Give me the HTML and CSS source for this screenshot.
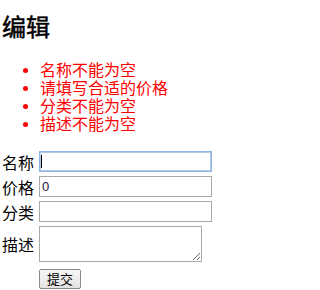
FILE: index.html
```html
<!DOCTYPE html>
<html lang="zh">
<head>
<meta charset="utf-8">
<title>编辑</title>
<link rel="stylesheet" href="styles.css">
</head>
<body>
<div class="page">
  <h2 class="title">编辑</h2>
  <ul class="errors">
    <li>名称不能为空</li>
    <li>请填写合适的价格</li>
    <li>分类不能为空</li>
    <li>描述不能为空</li>
  </ul>
  <form class="form">
    <div class="row">
      <label class="label">名称</label>
      <span class="field-wrap">
        <input class="field focused" type="text" value="">
        <span class="caret"></span>
      </span>
    </div>
    <div class="row">
      <label class="label">价格</label>
      <input class="field" type="text" value="0">
    </div>
    <div class="row">
      <label class="label">分类</label>
      <input class="field" type="text" value="">
    </div>
    <div class="row">
      <label class="label">描述</label>
      <textarea class="area"></textarea>
    </div>
    <div class="actions">
      <button class="submit" type="button">提交</button>
    </div>
  </form>
</div>
</body>
</html>
```

FILE: styles.css
```css
html, body {
  margin: 0;
  padding: 0;
  background: #fff;
}

body {
  font-family: "Noto Sans CJK SC", "Liberation Sans", sans-serif;
  font-size: 16px;
  color: #000;
}

.page {
  padding: 0 2px;
}

.title {
  margin: 12px 0 0;
  font-size: 24px;
  line-height: 28px;
  font-weight: 400;
  -webkit-text-stroke: 0.5px #000;
}

.errors {
  margin: 20px 0 0;
  padding-left: 38px;
  color: #ff0000;
  font-size: 16px;
  line-height: 18px;
}

.errors li::marker {
  font-size: 13px;
}

.form {
  margin-top: 19px;
  display: flex;
  flex-direction: column;
  gap: 4px;
}

.row {
  display: flex;
  align-items: center;
  gap: 5px;
}

.label {
  width: 32px;
  font-size: 16px;
  line-height: 18px;
  white-space: nowrap;
}

.field-wrap {
  position: relative;
  display: block;
}

.field {
  display: block;
  box-sizing: border-box;
  width: 173px;
  height: 21px;
  margin: 0;
  padding: 0 2px;
  border: 1px solid #a9a9a9;
  border-radius: 0;
  font-family: "Liberation Sans", sans-serif;
  font-size: 13px;
  color: #1a1040;
  outline: none;
  background: #fff;
}

.field.focused {
  border-color: #8db5ec;
  box-shadow: inset 0 0 0 1px #b4c8e4;
}

.caret {
  position: absolute;
  left: 2px;
  top: 4px;
  width: 1px;
  height: 13px;
  background: #000;
}

.area {
  display: block;
  box-sizing: border-box;
  width: 163px;
  height: 36px;
  margin: 0;
  padding: 1px 2px;
  border: 1px solid #a9a9a9;
  border-radius: 0;
  font-family: "Liberation Sans", sans-serif;
  font-size: 13px;
  outline: none;
  background: #fff;
}

.actions {
  margin-top: 3px;
  padding-left: 37px;
}

.submit {
  display: block;
  box-sizing: border-box;
  width: 42px;
  height: 20px;
  margin: 0;
  padding: 0;
  border: 1px solid #8a8a8a;
  border-radius: 2px;
  background: linear-gradient(#f7f7f7, #e2e2e2);
  font-family: "Noto Sans CJK SC", sans-serif;
  font-size: 13px;
  line-height: 18px;
  color: #000;
}
```
